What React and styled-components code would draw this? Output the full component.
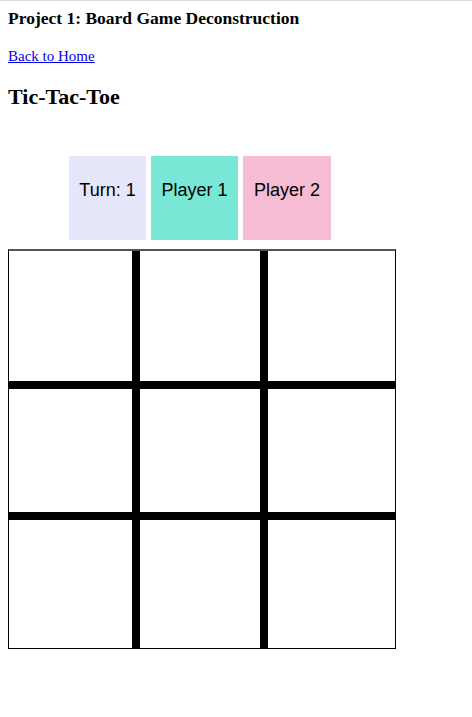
import styled, { createGlobalStyle } from 'styled-components';

const GlobalStyle = createGlobalStyle`
  html {
    border-top: 1px solid #dedede;
  }
  body {
    margin: 0 8px 8px 8px;
    font-family: "Liberation Serif", "Times New Roman", serif;
    background: #fff;
    color: #000;
  }
`;

const PageTitle = styled.h3`
  font-size: 17.5px;
  font-weight: bold;
  margin: 7px 0 19px 0;
`;

const HomeLink = styled.p`
  margin: 0;
  font-size: 15px;
  a {
    color: #0000ee;
    text-decoration: underline;
  }
`;

const GameTitle = styled.h2`
  font-size: 22px;
  font-weight: bold;
  margin: 19px 0 46px 0;
`;

const StatusRow = styled.div`
  display: flex;
  gap: 5px;
  padding-left: 61px;
  margin-bottom: 9px;
`;

const StatusBox = styled.div`
  height: 84px;
  padding: 24px 10px 0 10px;
  display: flex;
  align-items: flex-start;
  justify-content: center;
  background: ${(p) => p.$bg};
  font-family: "Liberation Sans", Arial, sans-serif;
  font-size: 18px;
  min-width: ${(p) => p.$w}px;
  box-sizing: border-box;
`;

const Board = styled.div`
  width: 388px;
  box-sizing: border-box;
  border: 1px solid #000;
  border-top: 2px solid #555;
  display: grid;
  grid-template-columns: 123px 120px 127px;
  grid-template-rows: 130px 123px 128px;
  gap: 8px;
  background: #000;
`;

const Cell = styled.div`
  background: #fff;
`;

export default function App() {
  return (
    <>
      <GlobalStyle />
      <PageTitle>Project 1: Board Game Deconstruction</PageTitle>
      <HomeLink>
        <a href="#">Back to Home</a>
      </HomeLink>
      <GameTitle>Tic-Tac-Toe</GameTitle>
      <StatusRow>
        <StatusBox $bg="#e6e6fa" $w={77}>Turn: 1</StatusBox>
        <StatusBox $bg="#78e7d5" $w={87}>Player 1</StatusBox>
        <StatusBox $bg="#f6bcd3" $w={88}>Player 2</StatusBox>
      </StatusRow>
      <Board>
        {Array.from({ length: 9 }).map((_, i) => (
          <Cell key={i} />
        ))}
      </Board>
    </>
  );
}
